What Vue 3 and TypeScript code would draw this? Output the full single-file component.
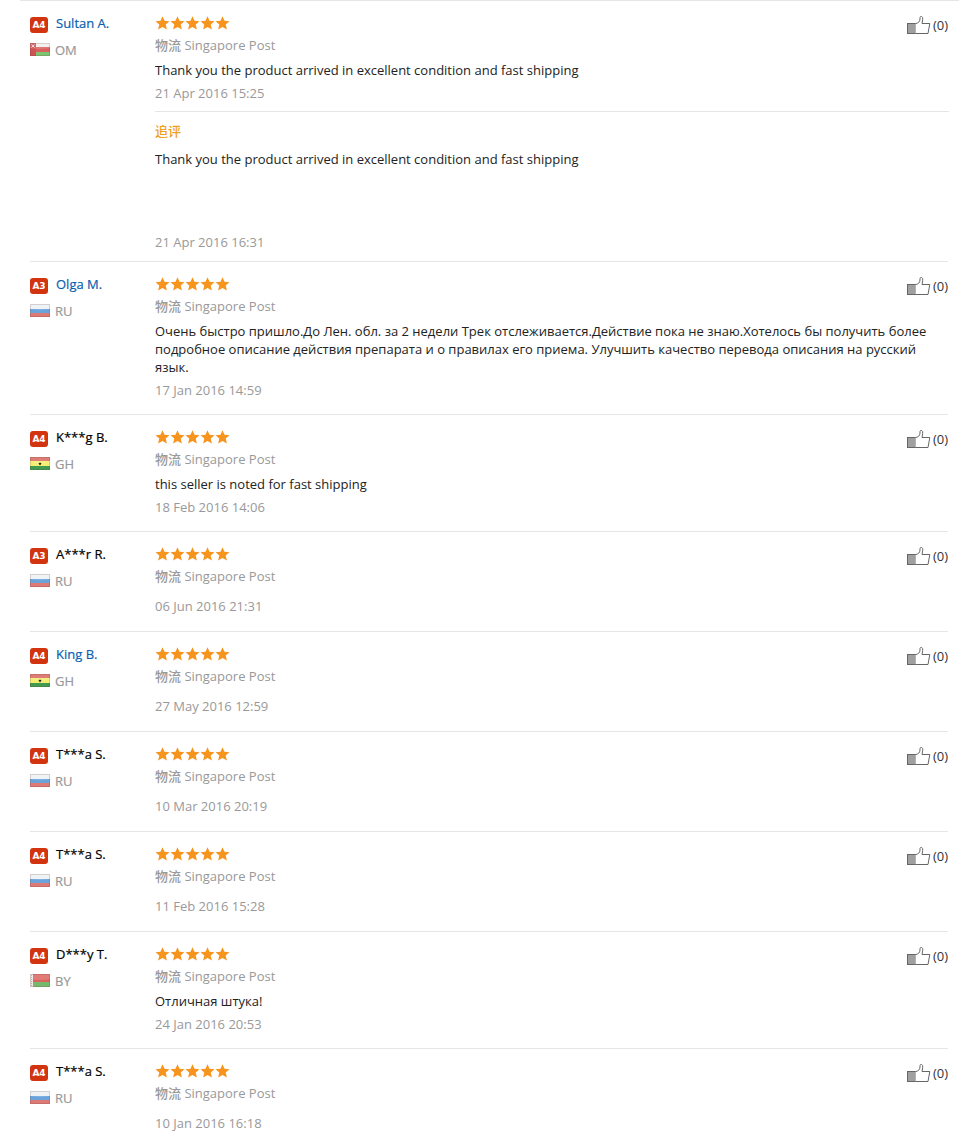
<script setup lang="ts">
type Country = 'OM' | 'RU' | 'GH' | 'BY'

interface Review {
  level: string
  name: string
  linked: boolean
  country: Country
  text: string
  date: string
  followUp?: { text: string; date: string }
}

const thanks = 'Thank you the product arrived in excellent condition and fast shipping'

const reviews: Review[] = [
  { level: 'A4', name: 'Sultan A.', linked: true, country: 'OM', text: thanks, date: '21 Apr 2016 15:25', followUp: { text: thanks, date: '21 Apr 2016 16:31' } },
  { level: 'A3', name: 'Olga M.', linked: true, country: 'RU', text: 'Очень быстро пришло.До Лен. обл. за 2 недели Трек отслеживается.Действие пока не знаю.Хотелось бы получить более подробное описание действия препарата и о правилах его приема. Улучшить качество перевода описания на русский язык.', date: '17 Jan 2016 14:59' },
  { level: 'A4', name: 'K***g B.', linked: false, country: 'GH', text: 'this seller is noted for fast shipping', date: '18 Feb 2016 14:06' },
  { level: 'A3', name: 'A***r R.', linked: false, country: 'RU', text: '', date: '06 Jun 2016 21:31' },
  { level: 'A4', name: 'King B.', linked: true, country: 'GH', text: '', date: '27 May 2016 12:59' },
  { level: 'A4', name: 'T***a S.', linked: false, country: 'RU', text: '', date: '10 Mar 2016 20:19' },
  { level: 'A4', name: 'T***a S.', linked: false, country: 'RU', text: '', date: '11 Feb 2016 15:28' },
  { level: 'A4', name: 'D***y T.', linked: false, country: 'BY', text: 'Отличная штука!', date: '24 Jan 2016 20:53' },
  { level: 'A4', name: 'T***a S.', linked: false, country: 'RU', text: '', date: '10 Jan 2016 16:18' },
]
</script>

<template>
  <main class="feedback">
    <article v-for="(r, i) in reviews" :key="i" class="review" :class="{ extended: r.followUp }">
      <div class="buyer">
        <div class="who">
          <span class="level">{{ r.level }}</span>
          <a v-if="r.linked" class="name" href="#">{{ r.name }}</a>
          <span v-else class="name">{{ r.name }}</span>
        </div>
        <div class="country">
          <svg class="flag" viewBox="0 0 20 13" aria-hidden="true">
            <template v-if="r.country === 'OM'">
              <rect width="20" height="13" fill="#f3eeee" />
              <rect y="4" width="20" height="5" fill="#d9605c" />
              <rect y="9" width="20" height="4" fill="#7cc470" />
              <rect width="6" height="13" fill="#cf5254" />
              <path d="M1.500 1.500l3 3M4.500 1.500l-3 3" stroke="#f3c9c9" />
            </template>
            <template v-else-if="r.country === 'RU'">
              <rect width="20" height="13" fill="#eef1f5" />
              <rect y="5" width="20" height="4" fill="#6ba3dc" />
              <rect y="9" width="20" height="4" fill="#dd7a76" />
            </template>
            <template v-else-if="r.country === 'GH'">
              <rect width="20" height="13" fill="#f4ee70" />
              <rect width="20" height="4" fill="#d9665e" />
              <rect y="9" width="20" height="4" fill="#429a50" />
              <path d="M10 5l.5 1.100 1.200.1-.9.8.3 1.200-1.100-.6-1.100.6.3-1.200-.9-.8 1.200-.1z" fill="#222" />
            </template>
            <template v-else>
              <rect width="20" height="13" fill="#dc6460" />
              <rect y="8" width="20" height="5" fill="#76b86c" />
              <rect width="3" height="13" fill="#efe6e4" />
              <path d="M1.500 1v11" stroke="#d9a09c" stroke-dasharray="1 1" />
            </template>
            <path d="M0 0h20v5Q10 7 0 5z" fill="#fff" opacity=".15" />
            <rect x=".5" y=".5" width="19" height="12" fill="none" stroke="#604040" stroke-opacity=".2" />
          </svg>
          <span>{{ r.country }}</span>
        </div>
      </div>

      <div class="content">
        <div class="stars" role="img" aria-label="5 / 5">
          <svg v-for="n in 5" :key="n" viewBox="0 0 15 14" aria-hidden="true">
            <path d="M7.500 .3l2 4.500 5 .5-3.800 3.300 1.200 5-4.400-2.700-4.400 2.700 1.200-5L.5 5.300l5-.5z" fill="#f7941d" />
          </svg>
        </div>
        <div class="shipping"><span class="cjk">物流</span> Singapore Post</div>
        <p class="text">{{ r.text }}</p>
        <time class="date">{{ r.date }}</time>
        <section v-if="r.followUp" class="follow-up">
          <h3>追评</h3>
          <p class="text">{{ r.followUp.text }}</p>
          <time class="date">{{ r.followUp.date }}</time>
        </section>
      </div>

      <button class="like" type="button">
        <svg viewBox="0 0 24 20" aria-hidden="true">
          <rect x=".5" y="8.500" width="8" height="10" fill="#a0a0a0" stroke="#666" />
          <path d="M8.500 8.500C11 8.500 13 6.500 13 4V2.500Q13.200 1.200 14.700 1.500Q16 2 15.700 4.500L15 8.500H22.800L21 18.500H8.500" fill="#fff" stroke="#666" stroke-linejoin="round" />
        </svg>
        <span>(0)</span>
      </button>
    </article>
  </main>
</template>

<style>
body {
  margin: 0;
  background: #fff;
}
</style>

<style scoped>
.feedback {
  padding: 0 17px 0 30px;
  font: 13px/18px 'Open Sans', 'Noto Sans CJK SC', sans-serif;
  color: #222;
}
.review {
  display: flex;
  box-sizing: border-box;
  min-height: 100px;
  padding: 13px 0 15px;
  border-top: 1px solid #e6e6e6;
}
.review:first-child {
  margin: 0 -11px 0 -10px;
  padding-right: 11px;
  padding-left: 10px;
}
.review.extended {
  padding-bottom: 10px;
}
.buyer {
  flex: 0 0 125px;
}
.who,
.country {
  display: flex;
}
.level {
  width: 18px;
  height: 16px;
  margin: 3px 8px 0 0;
  border-radius: 3px;
  background: #d2340f;
  color: #fff;
  font-family: 'DejaVu Sans', sans-serif;
  font-size: 9px;
  font-weight: 700;
  line-height: 16px;
  text-align: center;
}
.name {
  color: #000;
  text-decoration: none;
  -webkit-text-stroke: 0.2px currentColor;
}
a.name {
  color: #0a5fb0;
}
.country {
  gap: 5px;
  margin-top: 8px;
  color: #999;
  -webkit-text-stroke: 0.2px currentColor;
}
.flag {
  width: 20px;
  height: 13px;
  margin-top: 2px;
}
.content {
  flex: 1;
  min-width: 0;
}
.stars {
  display: flex;
  align-items: center;
  height: 18px;
}
.stars svg {
  width: 15px;
  height: 14px;
}
.shipping {
  height: 18px;
  margin-top: 4px;
  color: #999;
}
.cjk {
  font-weight: 500;
}
.text {
  max-width: 780px;
  margin: 0;
  padding: 7px 0 5px;
}
.date {
  display: block;
  color: #999;
}
.follow-up {
  margin-top: 9px;
  padding-top: 10px;
  border-top: 1px solid #e6e6e6;
}
.follow-up h3 {
  margin: 0 0 3px;
  color: #f0a020;
  font-size: 13px;
  font-weight: 500;
}
.follow-up .text {
  min-height: 78px;
}
.like {
  display: flex;
  align-self: flex-start;
  gap: 2px;
  margin: 1px 0 0 -42px;
  padding: 0;
  border: 0;
  background: none;
  color: #333;
  font: inherit;
  cursor: pointer;
}
.like svg {
  width: 24px;
  height: 20px;
}
.like span {
  line-height: 20px;
}
</style>
